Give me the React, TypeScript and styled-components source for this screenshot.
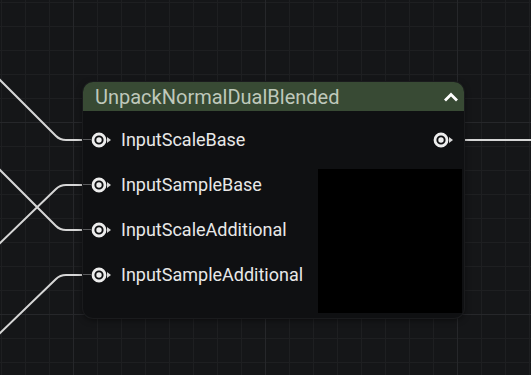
import * as React from 'react';
import styled, { createGlobalStyle } from 'styled-components';

const GlobalStyle = createGlobalStyle`
  html, body {
    margin: 0;
    padding: 0;
    background: #151618;
  }
  body {
    font-family: Roboto, "Noto Sans", sans-serif;
  }
`;

const Canvas = styled.div`
  position: relative;
  width: 531px;
  height: 375px;
  overflow: hidden;
  background-color: #151618;
  background-image:
    linear-gradient(to right, #26272a 1px, transparent 1px),
    linear-gradient(to bottom, #26272a 1px, transparent 1px),
    linear-gradient(to right, #1e1f21 1px, transparent 1px),
    linear-gradient(to bottom, #1e1f21 1px, transparent 1px);
  background-size: 192px 192px, 192px 192px, 24px 24px, 24px 24px;
  background-position: 73px 122px, 73px 122px, 1px 2px, 1px 2px;
`;

const Wires = styled.svg`
  position: absolute;
  left: 0;
  top: 0;
`;

const Node = styled.div`
  position: absolute;
  left: 83px;
  top: 82px;
  width: 381px;
  height: 236px;
  border-radius: 10px;
  background: #0f1012;
  box-shadow: 0 0 0 1px #1a1b1d, 0 2px 6px rgba(0, 0, 0, 0.5);
  overflow: hidden;
  display: flex;
  flex-direction: column;
`;

const Header = styled.div`
  height: 29px;
  flex: none;
  background: #384a34;
  display: flex;
  align-items: center;
  justify-content: space-between;
  padding: 0 4px 0 12px;
  color: #bfc8bb;
  font-size: 20px;
`;

const Body = styled.div`
  flex: 1;
  display: flex;
  justify-content: space-between;
  padding-top: 6px;
`;

const InputCol = styled.div`
  display: flex;
  flex-direction: column;
`;

const OutputCol = styled.div`
  display: flex;
  flex-direction: column;
  align-items: flex-end;
  padding-right: 2px;
`;

const PinRow = styled.div<{ $out?: boolean }>`
  height: 45px;
  display: flex;
  align-items: center;
  gap: 8px;
  color: #e8e8e8;
  font-size: 18px;
  margin-right: ${({ $out }) => ($out ? '7px' : '0')};
`;

const PinWrap = styled.div`
  display: flex;
  align-items: center;
`;

const Stub = styled.span`
  width: 8px;
  height: 1px;
  background: #5a5b5d;
`;

const Preview = styled.div`
  width: 144px;
  height: 144px;
  background: #000;
  margin-top: 7px;
`;

const Pin = () => (
  <svg width="22" height="16" viewBox="0 0 22 16">
    <circle cx="8" cy="8" r="6" fill="none" stroke="#ededed" strokeWidth="2.8" />
    <circle cx="8" cy="8" r="2.7" fill="#ededed" />
    <path d="M16 5 L20 8 L16 11 Z" fill="#d8d8d8" />
  </svg>
);

const Chevron = () => (
  <svg width="18" height="12" viewBox="0 0 18 12">
    <path d="M3 9.5 L9 3.5 L15 9.5" fill="none" stroke="#ffffff" strokeWidth="2.8" />
  </svg>
);

const inputs = ['InputScaleBase', 'InputSampleBase', 'InputScaleAdditional', 'InputSampleAdditional'];

const wirePath = (y0: number, y1: number) =>
  `M-4 ${y0 - 4} L${56} ${y1 - 4} Q60 ${y1} 66 ${y1} L84 ${y1}`;

export default function App() {
  return (
    <Canvas>
      <GlobalStyle />
      <Wires width="531" height="375">
        <g stroke="#d6d6d6" strokeWidth="2" fill="none">
          <path d={wirePath(80, 140)} />
          <path d={wirePath(170, 230)} />
          <path d="M-4 247 L56 189 Q60 185 66 185 L84 185" />
          <path d="M-4 337 L56 279 Q60 275 66 275 L84 275" />
          <path d="M465 140 L531 140" />
        </g>
      </Wires>
      <Node>
        <Header>
          <span>UnpackNormalDualBlended</span>
          <Chevron />
        </Header>
        <Body>
          <InputCol>
            {inputs.map((name) => (
              <PinRow key={name}>
                <PinWrap>
                  <Stub />
                  <Pin />
                </PinWrap>
                <span>{name}</span>
              </PinRow>
            ))}
          </InputCol>
          <OutputCol>
            <PinRow $out>
              <PinWrap>
                <Pin />
              </PinWrap>
            </PinRow>
            <Preview />
          </OutputCol>
        </Body>
      </Node>
    </Canvas>
  );
}
